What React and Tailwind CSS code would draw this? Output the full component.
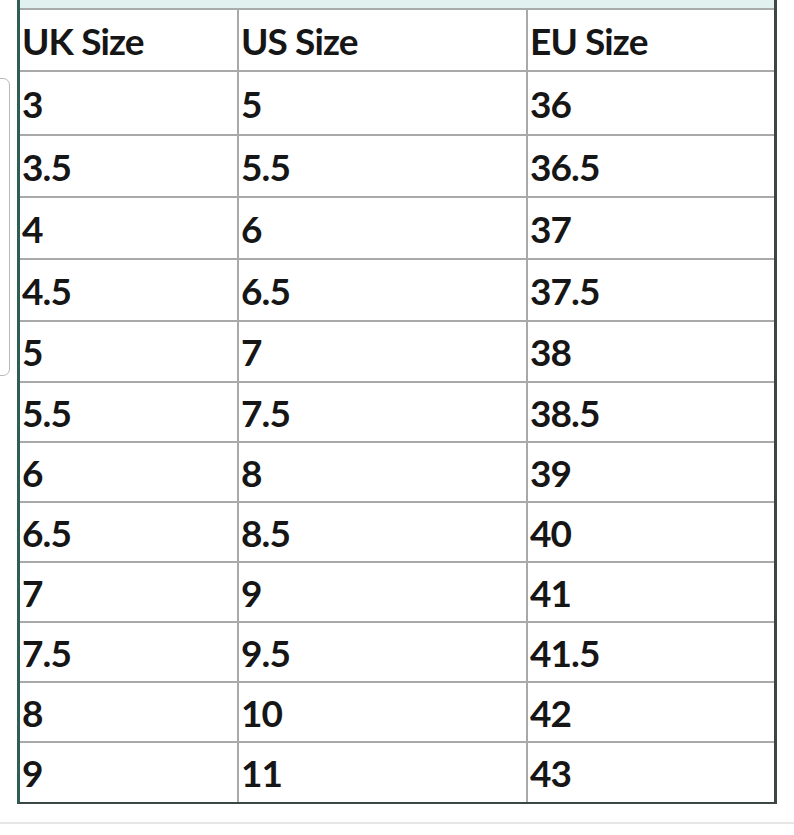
import React from "react";

const rows = [
  { c: ["UK Size", "US Size", "EU Size"], h: "h-[62px]" },
  { c: ["3", "5", "36"], h: "h-[64px]" },
  { c: ["3.5", "5.5", "36.5"], h: "h-[62px]" },
  { c: ["4", "6", "37"], h: "h-[62px]" },
  { c: ["4.5", "6.5", "37.5"], h: "h-[62px]" },
  { c: ["5", "7", "38"], h: "h-[61px]" },
  { c: ["5.5", "7.5", "38.5"], h: "h-[60px]" },
  { c: ["6", "8", "39"], h: "h-[60px]" },
  { c: ["6.5", "8.5", "40"], h: "h-[60px]" },
  { c: ["7", "9", "41"], h: "h-[60px]" },
  { c: ["7.5", "9.5", "41.5"], h: "h-[60px]" },
  { c: ["8", "10", "42"], h: "h-[60px]" },
  { c: ["9", "11", "43"], h: "h-[59px]" },
];

export default function App() {
  return (
    <div className="relative w-[794px] h-[835px] bg-white overflow-hidden font-['Lato','Open_Sans',sans-serif]">
      <div className="absolute left-[-12px] top-[78px] w-[22px] h-[298px] rounded-[7px] border border-[#b9b9b9]" />
      <div className="ml-[17px] w-[760px] border-l-[3px] border-l-[#2f5f54] border-r-[3px] border-r-[#3c4645] border-b-2 border-b-[#3c4645]">
        <div className="h-[10px] bg-[#e1f1f0] border-b-2 border-b-[#a8acab]" />
        {rows.map((r, i) => (
          <div
            key={i}
            className={`grid grid-cols-[219px_289px_1fr] ${r.h} ${
              i < rows.length - 1 ? "border-b-2 border-b-[#a9a9a9]" : ""
            }`}
          >
            {r.c.map((t, j) => (
              <div
                key={j}
                className={`flex items-center pl-[2px] text-[37px] font-bold text-[#161616] leading-none tracking-[-0.9px] ${
                  j < 2 ? "border-r-2 border-r-[#a9a9a9]" : ""
                }`}
              >
                {t}
              </div>
            ))}
          </div>
        ))}
      </div>
      <div className="mt-[18px] h-[2px] bg-[#e6e6e6]" />
    </div>
  );
}
